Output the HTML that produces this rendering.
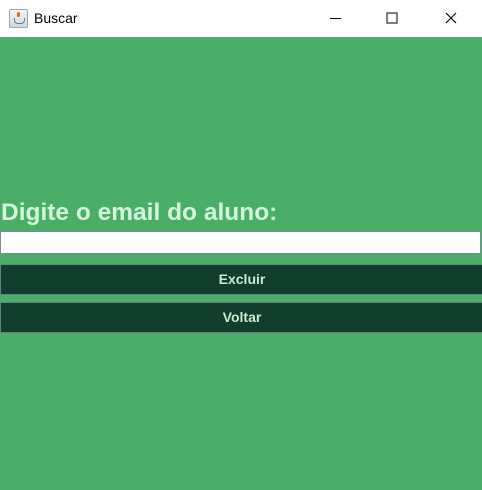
<!DOCTYPE html>
<html><head><meta charset="utf-8"><style>
html,body{margin:0;padding:0;width:482px;height:490px;overflow:hidden;font-family:"Liberation Sans",sans-serif}
#tb{position:absolute;left:0;top:0;width:482px;height:37px;background:#fff}
#tb .t{position:absolute;left:34px;top:10px;font-size:14px;color:#000}
#ic{position:absolute;left:9px;top:9px;width:17px;height:17px;border:1px solid #9aa;border-radius:2px;background:linear-gradient(#f4f6f8,#cfd8e0)}
#ic:after{content:"";position:absolute;left:4px;top:8px;width:9px;height:5px;border:1px solid #5a7da0;border-top:none;border-radius:0 0 4px 4px}
#ic:before{content:"";position:absolute;left:7px;top:2px;width:3px;height:5px;background:#e07020;border-radius:2px}
#main{position:absolute;left:0;top:37px;width:482px;height:453px;background:#4aae69}
#lab{position:absolute;left:1px;top:162px;font-size:24.5px;font-weight:bold;color:#d4f5dc}
#inp{position:absolute;left:0;top:194px;width:479px;height:21px;background:#fff;border:1px solid #7a8a99}
.b{position:absolute;left:0;width:490px;height:29px;background:#113d2d;border:1px solid #6d7b8a;color:#c8ecd0;font-weight:bold;font-size:14px;line-height:29px}
.b span{position:absolute;left:0;width:482px;text-align:center}
</style></head><body>
<div id="tb"><div id="ic"></div><span class="t">Buscar</span>
<svg style="position:absolute;left:320px;top:8px" width="150" height="20">
<line x1="10" y1="10.5" x2="21" y2="10.5" stroke="#000" stroke-width="1"/>
<rect x="67" y="5" width="10" height="10" fill="none" stroke="#000"/>
<path d="M126 5 L136 15 M136 5 L126 15" stroke="#000" stroke-width="1.1"/>
</svg></div>
<div id="main">
<div id="lab">Digite o email do aluno:</div>
<div id="inp"></div>
<div class="b" style="top:227px"><span>Excluir</span></div>
<div class="b" style="top:265px"><span>Voltar</span></div>
</div>
</body></html>
